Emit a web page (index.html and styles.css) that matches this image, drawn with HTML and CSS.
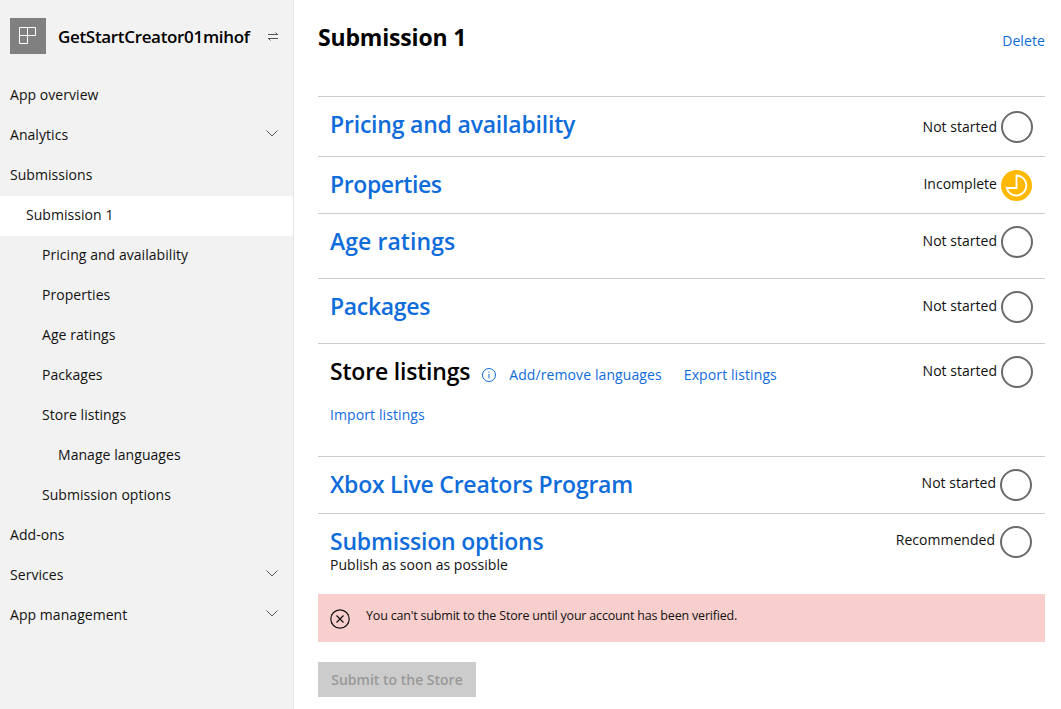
FILE: index.html
```html
<!DOCTYPE html>
<html lang="en">
<head>
    <meta charset="UTF-8">
    <meta name="viewport" content="width=device-width, initial-scale=1.0">
    <title>Submission 1</title>
    <link rel="stylesheet" href="styles.css">
</head>
<body>
    <nav class="sidebar">
        <div class="app-header">
            <div class="app-tile">
                <svg width="36" height="36" viewBox="0 0 36 36" fill="none" stroke="#fff" stroke-width="1">
                    <path d="M9.500 9.500h16v8h-16zM17.500 9.500v16M9.500 17.500v8h8"/>
                </svg>
            </div>
            <span class="app-name">GetStartCreator01mihof</span>
            <svg class="swap-icon" width="12" height="10" viewBox="0 0 12 10" fill="none" stroke="#555" stroke-width="1">
                <path d="M1 3.500h10M8.500 1.500l2 2M11 7.500H1M3.500 9.500l-2-2"/>
            </svg>
        </div>
        <a class="nav-item">App overview</a>
        <a class="nav-item">Analytics
            <svg class="chevron" width="12" height="7" viewBox="0 0 12 7" fill="none" stroke="#555"><path d="M.5.500l5.500 5.500 5.500-5.500"/></svg>
        </a>
        <a class="nav-item">Submissions</a>
        <a class="nav-item level-1 active">Submission 1</a>
        <a class="nav-item level-2">Pricing and availability</a>
        <a class="nav-item level-2">Properties</a>
        <a class="nav-item level-2">Age ratings</a>
        <a class="nav-item level-2">Packages</a>
        <a class="nav-item level-2">Store listings</a>
        <a class="nav-item level-3">Manage languages</a>
        <a class="nav-item level-2">Submission options</a>
        <a class="nav-item">Add-ons</a>
        <a class="nav-item">Services
            <svg class="chevron" width="12" height="7" viewBox="0 0 12 7" fill="none" stroke="#555"><path d="M.5.500l5.500 5.500 5.500-5.500"/></svg>
        </a>
        <a class="nav-item">App management
            <svg class="chevron" width="12" height="7" viewBox="0 0 12 7" fill="none" stroke="#555"><path d="M.5.500l5.500 5.500 5.500-5.500"/></svg>
        </a>
    </nav>

    <main class="content">
        <div class="page-header">
            <h1>Submission 1</h1>
            <a class="link delete-link">Delete</a>
        </div>

        <section class="row row-pricing">
            <a class="row-title">Pricing and availability</a>
            <div class="status"><span>Not started</span><span class="ring"></span></div>
        </section>
        <section class="row row-properties">
            <a class="row-title">Properties</a>
            <div class="status">
                <span>Incomplete</span>
                <svg class="pending" width="31" height="31" viewBox="0 0 31 31">
                    <circle cx="15.500" cy="15.500" r="15.500" fill="#ffb900"/>
                    <path d="M15.500 5.500a10 10 0 1 1-9.800 12.500h9.800z" fill="none" stroke="#fff" stroke-width="1.800"/>
                </svg>
            </div>
        </section>
        <section class="row row-age">
            <a class="row-title">Age ratings</a>
            <div class="status"><span>Not started</span><span class="ring"></span></div>
        </section>
        <section class="row row-packages">
            <a class="row-title">Packages</a>
            <div class="status"><span>Not started</span><span class="ring"></span></div>
        </section>
        <section class="row row-listings">
            <div class="listing-main">
                <div class="listing-line">
                    <h2>Store listings</h2>
                    <svg class="info-icon" width="14" height="14" viewBox="0 0 14 14" fill="none" stroke="#0f6cdb">
                        <circle cx="7" cy="7" r="6.500"/>
                        <path d="M7 6v4.500M7 3.500v1.200"/>
                    </svg>
                    <a class="link add-link">Add/remove languages</a>
                    <a class="link">Export listings</a>
                </div>
                <a class="link import-link">Import listings</a>
            </div>
            <div class="status"><span>Not started</span><span class="ring"></span></div>
        </section>
        <section class="row row-xbox">
            <a class="row-title">Xbox Live Creators Program</a>
            <div class="status"><span>Not started</span><span class="ring"></span></div>
        </section>
        <section class="row row-options">
            <div>
                <a class="row-title">Submission options</a>
                <p class="row-note">Publish as soon as possible</p>
            </div>
            <div class="status"><span>Recommended</span><span class="ring"></span></div>
        </section>

        <div class="alert">
            <svg width="20" height="20" viewBox="0 0 20 20" fill="none" stroke="#111" stroke-width="1.200">
                <circle cx="10" cy="10" r="9.200"/>
                <path d="M6.500 6.500l7 7M13.500 6.500l-7 7"/>
            </svg>
            <span>You can't submit to the Store until your account has been verified.</span>
        </div>
        <button class="submit-btn" disabled>Submit to the Store</button>
    </main>
</body>
</html>
```

FILE: styles.css
```css
body {
    font-family: "Open Sans", "Noto Sans", sans-serif;
    font-size: 14px;
    color: #111;
    background-color: #fff;
    display: flex;
    height: 709px;
    margin: 0;
    overflow: hidden;
}

.sidebar {
    width: 293px;
    flex-shrink: 0;
    background-color: #f2f2f2;
    border-right: 1px solid #e6e6e6;
}

.app-header {
    display: flex;
    align-items: center;
    height: 76px;
    padding: 0 14px 4px 10px;
    box-sizing: border-box;
}

.app-tile {
    width: 36px;
    height: 36px;
    background-color: #808080;
}

.app-name {
    font-size: 17px;
    font-weight: 600;
    color: #000;
    margin-left: 12px;
    letter-spacing: -0.33px;
    flex: 1;
}

.nav-item {
    display: flex;
    align-items: center;
    justify-content: space-between;
    height: 40px;
    box-sizing: border-box;
    padding: 0 15px 4px 10px;
    letter-spacing: 0.05px;
}

.chevron {
    margin-top: -2px;
}

.level-1 { padding-left: 26px; }
.level-2 { padding-left: 42px; }
.level-3 { padding-left: 58px; }

.active {
    background-color: #fff;
}

.content {
    flex: 1;
    padding: 0 16px 0 24px;
    min-width: 0;
}

.page-header {
    display: flex;
    justify-content: space-between;
    height: 96px;
}

h1 {
    font-size: 23px;
    font-weight: 700;
    color: #000;
    margin: 21px 0 0;
    line-height: 32px;
    letter-spacing: -0.17px;
}

.link {
    color: #0f6cdb;
    letter-spacing: 0.1px;
}

.delete-link {
    margin-top: 31px;
}

.row {
    display: flex;
    justify-content: space-between;
    border-top: 1px solid #ccc;
    padding: 0 12px;
    box-sizing: border-box;
    height: 65px;
}

.row-pricing { height: 60px; }
.row-properties { height: 57px; }
.row-listings { height: 113px; }
.row-xbox { height: 57px; padding-right: 13px; }
.row-options { height: 81px; padding-right: 13px; }

.row-title {
    display: block;
    font-size: 23px;
    font-weight: 600;
    color: #0f6cdb;
    line-height: 32px;
    margin-top: 11px;
    letter-spacing: -0.2px;
}

.row-properties .row-title { letter-spacing: -0.4px; }
.row-age .row-title { letter-spacing: 0.07px; }
.row-packages .row-title { letter-spacing: -0.32px; }
.row-xbox .row-title { letter-spacing: -0.24px; }

.row-note {
    margin: -1px 0 0;
    line-height: 18px;
    letter-spacing: 0.02px;
}

.status {
    display: flex;
    align-items: center;
    gap: 4px;
    height: 32px;
    margin-top: 12px;
    letter-spacing: 0.02px;
}

.status span:first-child {
    margin-top: -4px;
}

.row-pricing .status { margin-top: 14px; }
.row-pricing .status span:first-child { margin-top: -2px; }

.pending { margin-right: 1px; }

.row-xbox .status span:first-child,
.row-options .status span:first-child {
    margin-top: -6px;
}

.row-options .status { gap: 5px; }

.ring {
    width: 32px;
    height: 32px;
    box-sizing: border-box;
    border: 2px solid #6b6b6b;
    border-radius: 50%;
}

.listing-line {
    display: flex;
    align-items: center;
    margin-top: 11px;
    height: 32px;
}

h2 {
    font-size: 23px;
    font-weight: 600;
    color: #000;
    margin: 0;
    letter-spacing: -0.2px;
}

.listing-line .link {
    margin-top: 7px;
}

.info-icon {
    margin: 7px 13px 0 12px;
}

.add-link {
    margin-right: 22px;
}

.import-link {
    display: block;
    margin-top: 18px;
}

.alert {
    display: flex;
    align-items: flex-start;
    height: 48px;
    box-sizing: border-box;
    background-color: #f8cfcd;
    padding: 13px 12px 0;
    font-size: 12.500px;
    letter-spacing: -0.19px;
}

.alert span {
    margin-left: 16px;
}

.alert svg {
    margin-top: 2px;
}

.submit-btn {
    display: block;
    margin-top: 20px;
    width: 158px;
    height: 35px;
    padding: 0;
    border: none;
    background-color: #ccc;
    color: #999;
    font-family: inherit;
    font-size: 14px;
    font-weight: 600;
    letter-spacing: 0;
}
```
